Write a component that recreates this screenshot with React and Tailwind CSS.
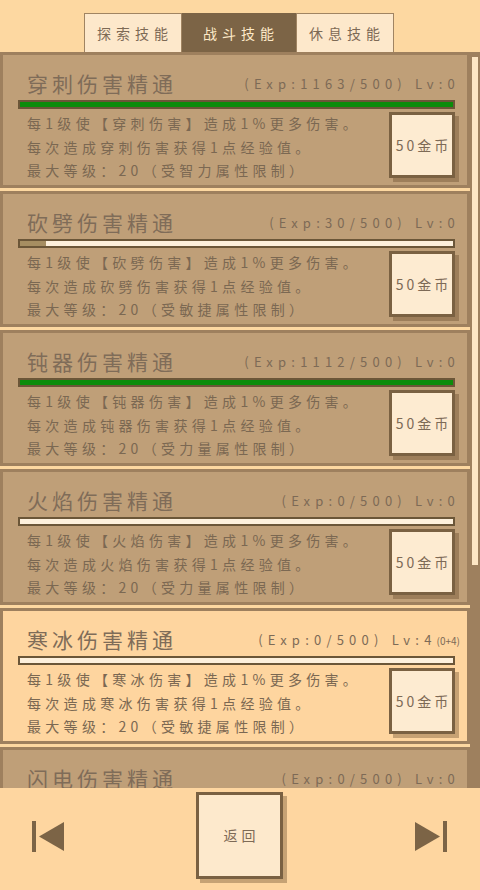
import React from 'react';

const skills = [
  { name: '穿刺伤害精通', type: '穿刺伤害', exp: 1163, lv: '0', attr: '智力' },
  { name: '砍劈伤害精通', type: '砍劈伤害', exp: 30, lv: '0', attr: '敏捷' },
  { name: '钝器伤害精通', type: '钝器伤害', exp: 1112, lv: '0', attr: '力量' },
  { name: '火焰伤害精通', type: '火焰伤害', exp: 0, lv: '0', attr: '力量' },
  { name: '寒冰伤害精通', type: '寒冰伤害', exp: 0, lv: '4', bonus: '(0+4)', attr: '敏捷', selected: true },
  { name: '闪电伤害精通', type: '闪电伤害', exp: 0, lv: '0', attr: '智力' }
];

const MAX_EXP = 500;

const tabs = ['探索技能', '战斗技能', '休息技能'];

const font = "font-['Noto_Sans_CJK_SC','Noto_Sans',sans-serif]";

const ExpBar = ({ exp }) => {
  const full = exp >= MAX_EXP;
  const pct = Math.min(100, (exp / MAX_EXP) * 100);
  return (
    <div className="mt-[3px] h-[9px] border-2 border-[#6b5638] bg-[#fdf0dc] overflow-hidden">
      <div
        className={full ? 'h-full bg-[#0b8c0b]' : 'h-full bg-[#a68e62]'}
        style={{ width: `${pct}%` }}
      />
    </div>
  );
};

const SkillCard = ({ skill }) => (
  <div
    className={`shrink-0 h-[136px] border-[3px] border-[#9e805e] pl-[15px] pr-[12px] ${
      skill.selected ? 'bg-[#fed59f]' : 'bg-[#bf9f78]'
    }`}
  >
    {/* title + exp */}
    <div className="mt-[14px] h-[28px] flex items-center justify-between pl-[9px]">
      <span className="text-[21px] tracking-[4px] text-[#7f6c58] leading-none whitespace-nowrap">{skill.name}</span>
      <span className="text-[13px] tracking-[5.2px] -mr-[5px] text-[#7d6a56] leading-none whitespace-nowrap">
        (Exp:{skill.exp}/{MAX_EXP}) Lv:{skill.lv}
        {skill.bonus && <span className="text-[10px] tracking-normal">{skill.bonus}</span>}
      </span>
    </div>

    <ExpBar exp={skill.exp} />

    <div className="mt-[3px] flex justify-between">
      <div className="pl-[9px] text-[14px] tracking-[4.3px] leading-[23.5px] text-[#7b6852] whitespace-nowrap">
        <p>每1级使【{skill.type}】造成1%更多伤害。</p>
        <p>每次造成{skill.type}获得1点经验值。</p>
        <p>最大等级：20（受{skill.attr}属性限制）</p>
      </div>
      <button className="shrink-0 w-[66px] h-[66px] border-[3px] border-[#7a6142] bg-[#fdebd1] shadow-[4px_4px_0_rgba(95,65,35,0.35)] flex items-center justify-center text-[14px] tracking-[3px] pl-[3px] whitespace-nowrap text-[#7d6a56]">
        50金币
      </button>
    </div>
  </div>
);

const PrevIcon = () => (
  <svg width="32" height="32" viewBox="0 0 32 32" fill="#7c6446">
    <rect x="0" y="0" width="4" height="31" />
    <polygon points="7,15.5 32,1 32,30" />
  </svg>
);

const NextIcon = () => (
  <svg width="32" height="32" viewBox="0 0 32 32" fill="#7c6446">
    <polygon points="0,1 25,15.5 0,30" />
    <rect x="28" y="0" width="4" height="31" />
  </svg>
);

export default function App() {
  return (
    <div className={`w-[480px] h-[890px] flex flex-col bg-[#fdd8a1] overflow-hidden ${font}`}>
      {/* Tabs */}
      <div className="h-[52px] shrink-0 flex items-end justify-center">
        <div className="flex h-[39px] ml-[-3px]">
          {tabs.map((t, i) => (
            <div
              key={t}
              className={`h-full flex items-center justify-center text-[14px] tracking-[5px] pl-[5px] border border-b-0 whitespace-nowrap ${
                i === 1
                  ? 'w-[114px] bg-[#7c6446] border-[#7c6446] text-[#fde9c8]'
                  : 'w-[98px] bg-[#fde8cb] border-[#a08462] text-[#7d6a56]'
              }`}
            >
              {t}
            </div>
          ))}
        </div>
      </div>

      {/* Skill list */}
      <div className="h-[736px] shrink-0 flex overflow-hidden">
        <div className="w-[470px] flex flex-col gap-[3px] bg-[#fdd8a1]">
          {skills.map((s) => (
            <SkillCard key={s.name} skill={s} />
          ))}
        </div>
        <div className="w-[10px] bg-[#9e805e]">
          <div className="mt-[5px] ml-[2px] w-[6px] h-[508px] bg-[#fde6c4]" />
        </div>
      </div>

      {/* Bottom nav */}
      <div className="h-[102px] shrink-0 bg-[#fed6a0] flex items-start justify-between pl-[32px] pr-[33px] pt-[4px]">
        <div className="mt-[29px]">
          <PrevIcon />
        </div>
        <button className="w-[87px] h-[87px] border-[3px] border-[#7a6142] bg-[#fde9cc] shadow-[4px_4px_0_rgba(95,65,35,0.35)] flex items-center justify-center text-[14px] tracking-[4px] pl-[4px] whitespace-nowrap text-[#7d6a56]">
          返回
        </button>
        <div className="mt-[29px]">
          <NextIcon />
        </div>
      </div>
    </div>
  );
}
